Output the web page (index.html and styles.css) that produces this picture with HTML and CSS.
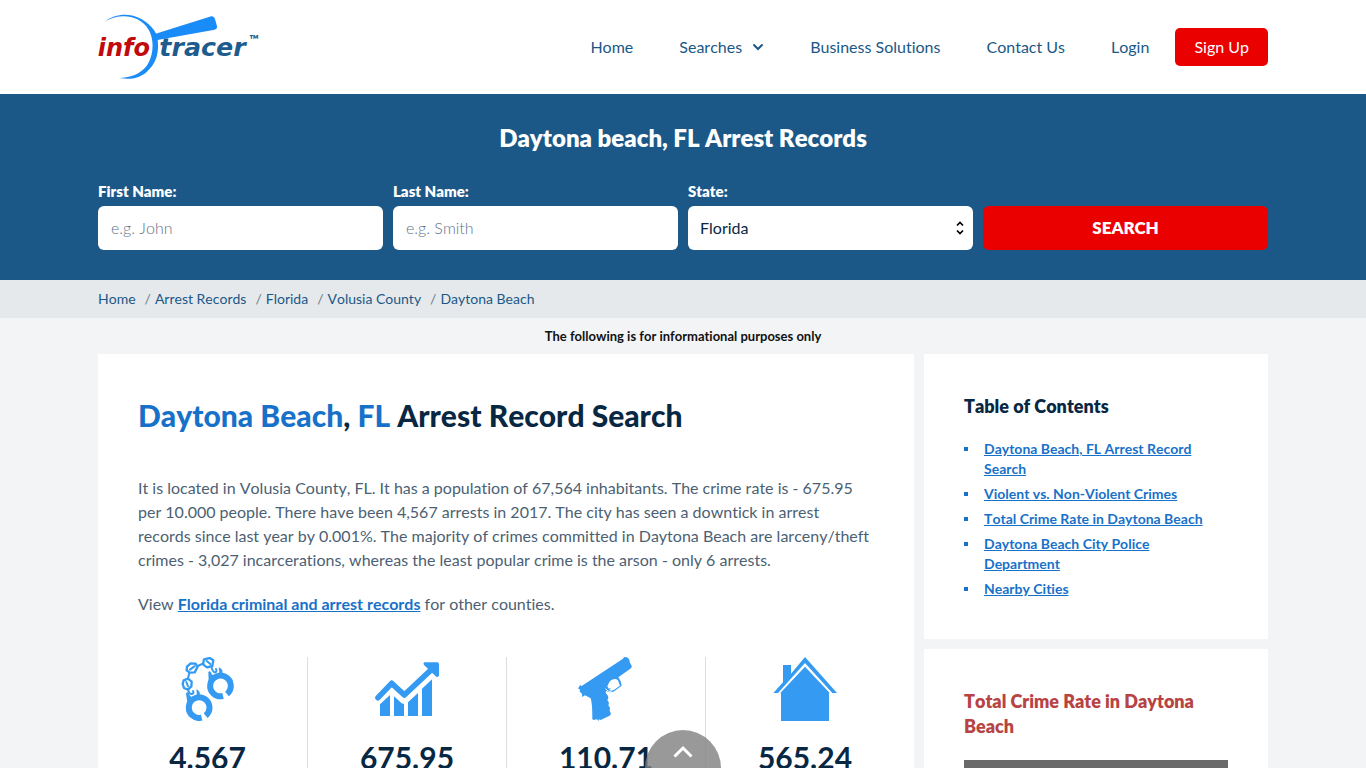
FILE: index.html
```html
<!DOCTYPE html>
<html lang="en">
<head>
<meta charset="utf-8">
<meta name="viewport" content="width=device-width, initial-scale=1">
<title>Daytona Beach, FL Arrest Records</title>
<link rel="stylesheet" href="styles.css">
</head>
<body>
<header class="site-header">
  <div class="container header-row">
    <a class="logo" href="#" aria-label="InfoTracer">
      <svg viewBox="30 27 489 216" width="163" height="72">
        <path fill="#1a8cf8" d="M50 51C78 26 122 24 152 38C182 52 202 74 208 95C214 140 208 172 176 201C154 220 125 225 95 219C140 217 167 198 180 176C198 145 198 102 182 74C164 44 132 33 104 34C80 35 65 42 50 51Z"/>
        <path fill="#1a8cf8" d="M198 88L370 34Q377 32 381 42L387 64Q388 72 380 74L204 106Z"/>
        <text class="logo-info" x="29" y="152">info</text>
        <text class="logo-tracer" x="214" y="152">tracer</text>
        <text class="logo-tm" x="483" y="118">™</text>
      </svg>
    </a>
    <nav class="nav">
      <a href="#">Home</a>
      <a href="#" class="nav-drop">Searches
        <svg viewBox="0 0 12 8" width="12" height="8"><path d="M2 2L6 6L10 2" fill="none" stroke="currentColor" stroke-width="2" stroke-linecap="round"/></svg>
      </a>
      <a href="#">Business Solutions</a>
      <a href="#">Contact Us</a>
      <a href="#">Login</a>
      <a href="#" class="signup">Sign Up</a>
    </nav>
  </div>
</header>

<section class="hero">
  <div class="container">
    <h2 class="hero-title">Daytona beach, FL Arrest Records</h2>
    <form class="search-form">
      <div class="field">
        <label for="first">First Name:</label>
        <input id="first" type="text" placeholder="e.g. John">
      </div>
      <div class="field">
        <label for="last">Last Name:</label>
        <input id="last" type="text" placeholder="e.g. Smith">
      </div>
      <div class="field">
        <label for="state">State:</label>
        <div class="select-wrap">
          <select id="state"><option>Florida</option></select>
          <svg class="select-arrows" viewBox="0 0 8 14" width="8" height="14"><path d="M1 4.500L4 1.500L7 4.500M1 9.500L4 12.500L7 9.500" fill="none" stroke="#000" stroke-width="1.700"/></svg>
        </div>
      </div>
      <button type="button" class="search-btn">SEARCH</button>
    </form>
  </div>
</section>

<nav class="crumbs" aria-label="Breadcrumb">
  <ol class="container crumb-list">
    <li><a href="#">Home</a></li>
    <li><a href="#">Arrest Records</a></li>
    <li><a href="#">Florida</a></li>
    <li><a href="#">Volusia County</a></li>
    <li><a href="#">Daytona Beach</a></li>
  </ol>
</nav>

<p class="notice">The following is for informational purposes only</p>

<div class="container layout">
  <main class="card article">
    <h1><span>Daytona Beach</span>, <span>FL</span> Arrest Record Search</h1>
    <p>It is located in Volusia County, FL. It has a population of 67,564 inhabitants. The crime rate is - 675.95 per 10.000 people. There have been 4,567 arrests in 2017. The city has seen a downtick in arrest records since last year by 0.001%. The majority of crimes committed in Daytona Beach are larceny/theft crimes - 3,027 incarcerations, whereas the least popular crime is the arson - only 6 arrests.</p>
    <p>View <a href="#">Florida criminal and arrest records</a> for other counties.</p>
    <ul class="stats">
      <li>
        <svg viewBox="48 36 192 192" width="64" height="64" fill="none" stroke="#359bf2">
          <g stroke-width="18">
            <path d="M201 147A31 31 0 1 0 189 153"/>
            <path d="M137 212A31 31 0 1 0 125 218"/>
          </g>
          <g stroke="none" fill="#359bf2">
            <path d="M146 108L145 82Q147 76 152 80Q155 92 165 92L160 100ZM172 92Q180 86 177 74Q174 66 180 68L187 76L188 92Z"/>
            <path d="M82 172L78 146Q80 140 86 143Q90 156 98 157L94 165ZM104 156Q112 151 110 140Q107 131 113 134L119 142L120 158Z"/>
          </g>
          <g stroke-width="7" stroke-linejoin="round">
            <path d="M132 43L149 39L160 46L157 63L141 67L129 58Z"/>
            <path d="M81 65L92 55L107 56L112 67L104 82L89 83L80 76Z"/>
            <path d="M71 106L84 101L95 110L94 124L84 134L72 129L68 117Z"/>
          </g>
          <g stroke-width="6" stroke-linecap="round">
            <path d="M113 63L130 55M88 84L84 100M140 48L151 57M90 74L103 64M79 111L84 124"/>
            <path d="M155 67Q158 82 166 82Q172 80 168 72M84 134Q88 148 96 147Q103 145 99 138"/>
          </g>
        </svg>
        <strong>4.567</strong>
      </li>
      <li>
        <svg viewBox="75 36 192 192" width="64" height="64" fill="#359bf2">
          <path d="M84 158L125 115L163 150L248 70" fill="none" stroke="#359bf2" stroke-width="17" stroke-linecap="round" stroke-linejoin="round"/>
          <path d="M223 52H262Q267 52 267 57V92Q263 99 257 94L222 60Q218 55 223 52Z"/>
          <path d="M90 178L120 150V213H90ZM132 154L155 175L162 177V213H132ZM174 172L204 144V213H174ZM216 131L246 103V213H216Z"/>
        </svg>
        <strong>675.95</strong>
      </li>
      <li>
        <svg viewBox="75 36 192 192" width="64" height="64" fill="#359bf2">
          <path fill-rule="evenodd" d="M90 126L93 120L98 123L222 41L225 36L233 37Q242 40 242 51L249 65L244 71L208 97L215 109L218 122L196 139Q181 146 172 137L170 143Q178 151 178 160L175 165L180 173L178 181L183 188L182 197L186 206L182 212L155 225L150 223L149 228L144 223L132 225L130 221Q130 174 125 160L108 151L100 156L98 145L92 140L93 134L87 130ZM181 111L175 124L179 131L186 129L181 135Q191 139 198 133L213 122L207 106L201 102Q188 101 181 111Z"/>
          <path d="M169 131Q177 142 188 139" fill="none" stroke="#fff" stroke-width="3"/>
        </svg>
        <strong>110.71</strong>
      </li>
      <li>
        <svg viewBox="99 36 192 192" width="64" height="64" fill="#359bf2">
          <path d="M100 144L129 112V60H153V86L195 36L291 144H277L195 54L114 144Z"/>
          <path d="M123 142L195 65L267 142V228H123Z"/>
        </svg>
        <strong>565.24</strong>
      </li>
    </ul>
  </main>
  <aside class="sidebar">
    <section class="card side-card">
      <h3>Table of Contents</h3>
      <ul class="toc">
        <li><a href="#">Daytona Beach, FL Arrest Record Search</a></li>
        <li><a href="#">Violent vs. Non-Violent Crimes</a></li>
        <li><a href="#">Total Crime Rate in Daytona Beach</a></li>
        <li><a href="#">Daytona Beach City Police Department</a></li>
        <li><a href="#">Nearby Cities</a></li>
      </ul>
    </section>
    <section class="card side-card">
      <h3 class="rate-title">Total Crime Rate in Daytona Beach</h3>
      <div class="rate-bar"></div>
    </section>
  </aside>
</div>

<button type="button" class="to-top" aria-label="Back to top">
  <svg viewBox="0 0 20 14" width="20" height="14"><path d="M1.500 11.500L10 3L18.500 11.500" fill="none" stroke="#fff" stroke-width="3"/></svg>
</button>
</body>
</html>
```
FILE: styles.css
```css
* { box-sizing: border-box; }

body {
  margin: 0;
  background: #f2f4f6;
  color: #082743;
  font: 16px/24px Lato, "Open Sans", sans-serif;
  font-kerning: none;
  font-variant-ligatures: none;
}

h1, h2, h3, p, ul, ol { margin: 0; padding: 0; }
ul, ol { list-style: none; }
svg { display: block; }

.container {
  width: 100%;
  max-width: 1170px;
  margin: 0 auto;
}

.site-header { background: #fff; }

.header-row {
  display: flex;
  align-items: center;
  justify-content: space-between;
  min-height: 94px;
}

.logo { margin-top: 6px; }
.logo text { font-family: "DejaVu Sans", sans-serif; font-weight: 700; font-style: italic; }
.logo .logo-info { font-size: 72px; fill: #c00a0e; }
.logo .logo-tracer { font-size: 76px; fill: #1f5c8e; }
.logo .logo-tm { font-family: Lato, sans-serif; font-size: 38px; font-style: normal; font-weight: 900; fill: #1f5c8e; }

.nav { display: flex; align-items: center; gap: 46px; }
.nav a { color: #1b5887; text-decoration: none; }
.nav .nav-drop { display: flex; align-items: center; gap: 10px; }
.nav .signup {
  margin-left: -20px;
  padding: 7px 19px;
  border-radius: 5px;
  background: #eb0000;
  color: #fff;
}

.hero { padding: 28px 0 30px; background: #1b5887; color: #fff; }
.hero-title { font-size: 24px; line-height: 32px; font-weight: 800; text-align: center; }

.search-form {
  display: grid;
  grid-template-columns: repeat(4, 1fr);
  align-items: end;
  gap: 10px;
  margin-top: 26px;
}

.field label {
  display: block;
  margin-bottom: 4px;
  font-size: 15px;
  line-height: 22px;
  font-weight: 800;
}

.field input, .field select {
  display: block;
  width: 100%;
  height: 44px;
  padding: 0 13px 2px;
  border: 0;
  border-radius: 6px;
  background: #fff;
  color: #082743;
  font: inherit;
}
.field select { padding: 0 12px; appearance: none; }
.field input::placeholder { color: #5f7288; font-weight: 300; }
.select-wrap { position: relative; }
.select-arrows { position: absolute; top: 15px; right: 9px; pointer-events: none; }

.search-btn {
  height: 44px;
  border: 0;
  border-radius: 6px;
  background: #eb0000;
  color: #fff;
  font: 800 17px/24px Lato, sans-serif;
}

.crumbs { background: #e5e9ec; }
.crumb-list { display: flex; padding: 8px 0; font-size: 14px; line-height: 22px; }
.crumb-list a { color: #1b5887; text-decoration: none; }
.crumb-list li + li::before { content: "/"; margin: 0 4px 0 9px; color: #6b7b8b; }

.notice {
  padding: 8px 0;
  color: #111;
  font-size: 13px;
  line-height: 20px;
  font-weight: 700;
  text-align: center;
}

.layout { display: grid; grid-template-columns: 816fr 344fr; gap: 10px; }
.card { background: #fff; }

.article { padding: 40px; color: #4c5f73; }
.article h1 {
  margin-bottom: 40px;
  color: #082743;
  font-size: 30px;
  line-height: 42px;
  font-weight: 900;
}
.article h1 span { color: #1871c9; }
.article p { margin-bottom: 20px; }
.article a { color: #1871c9; font-weight: 700; }

.stats {
  display: grid;
  grid-template-columns: repeat(4, 1fr);
  margin: 41px -30px 0;
}
.stats li {
  display: flex;
  flex-direction: column;
  align-items: center;
  gap: 17px;
  min-height: 150px;
}
.stats li + li { border-left: 1px solid #dcdfe2; }
.stats strong { color: #082743; font-size: 30px; line-height: 38px; }

.sidebar { display: flex; flex-direction: column; gap: 10px; }
.side-card { padding: 40px; }
.side-card h3 { color: #082743; font-size: 18px; line-height: 25px; font-weight: 800; }
.side-card .rate-title { color: #b74343; }

.toc { margin-top: 20px; font-size: 14px; line-height: 20px; }
.toc li { position: relative; padding-left: 20px; }
.toc li + li { margin-top: 5px; }
.toc li::before {
  content: "";
  position: absolute;
  top: 8px;
  left: 0;
  width: 4px;
  height: 4px;
  background: #1871c9;
}
.toc a { color: #1871c9; font-weight: 700; }

.rate-bar { height: 36px; margin-top: 21px; background: #6a6a6a; }

.to-top {
  position: fixed;
  bottom: 0;
  left: 50%;
  display: flex;
  justify-content: center;
  width: 76px;
  height: 38px;
  margin-left: -38px;
  padding: 15px 0 0;
  border: 0;
  border-radius: 38px 38px 0 0;
  background: rgba(128, 128, 128, 0.8);
}
```
